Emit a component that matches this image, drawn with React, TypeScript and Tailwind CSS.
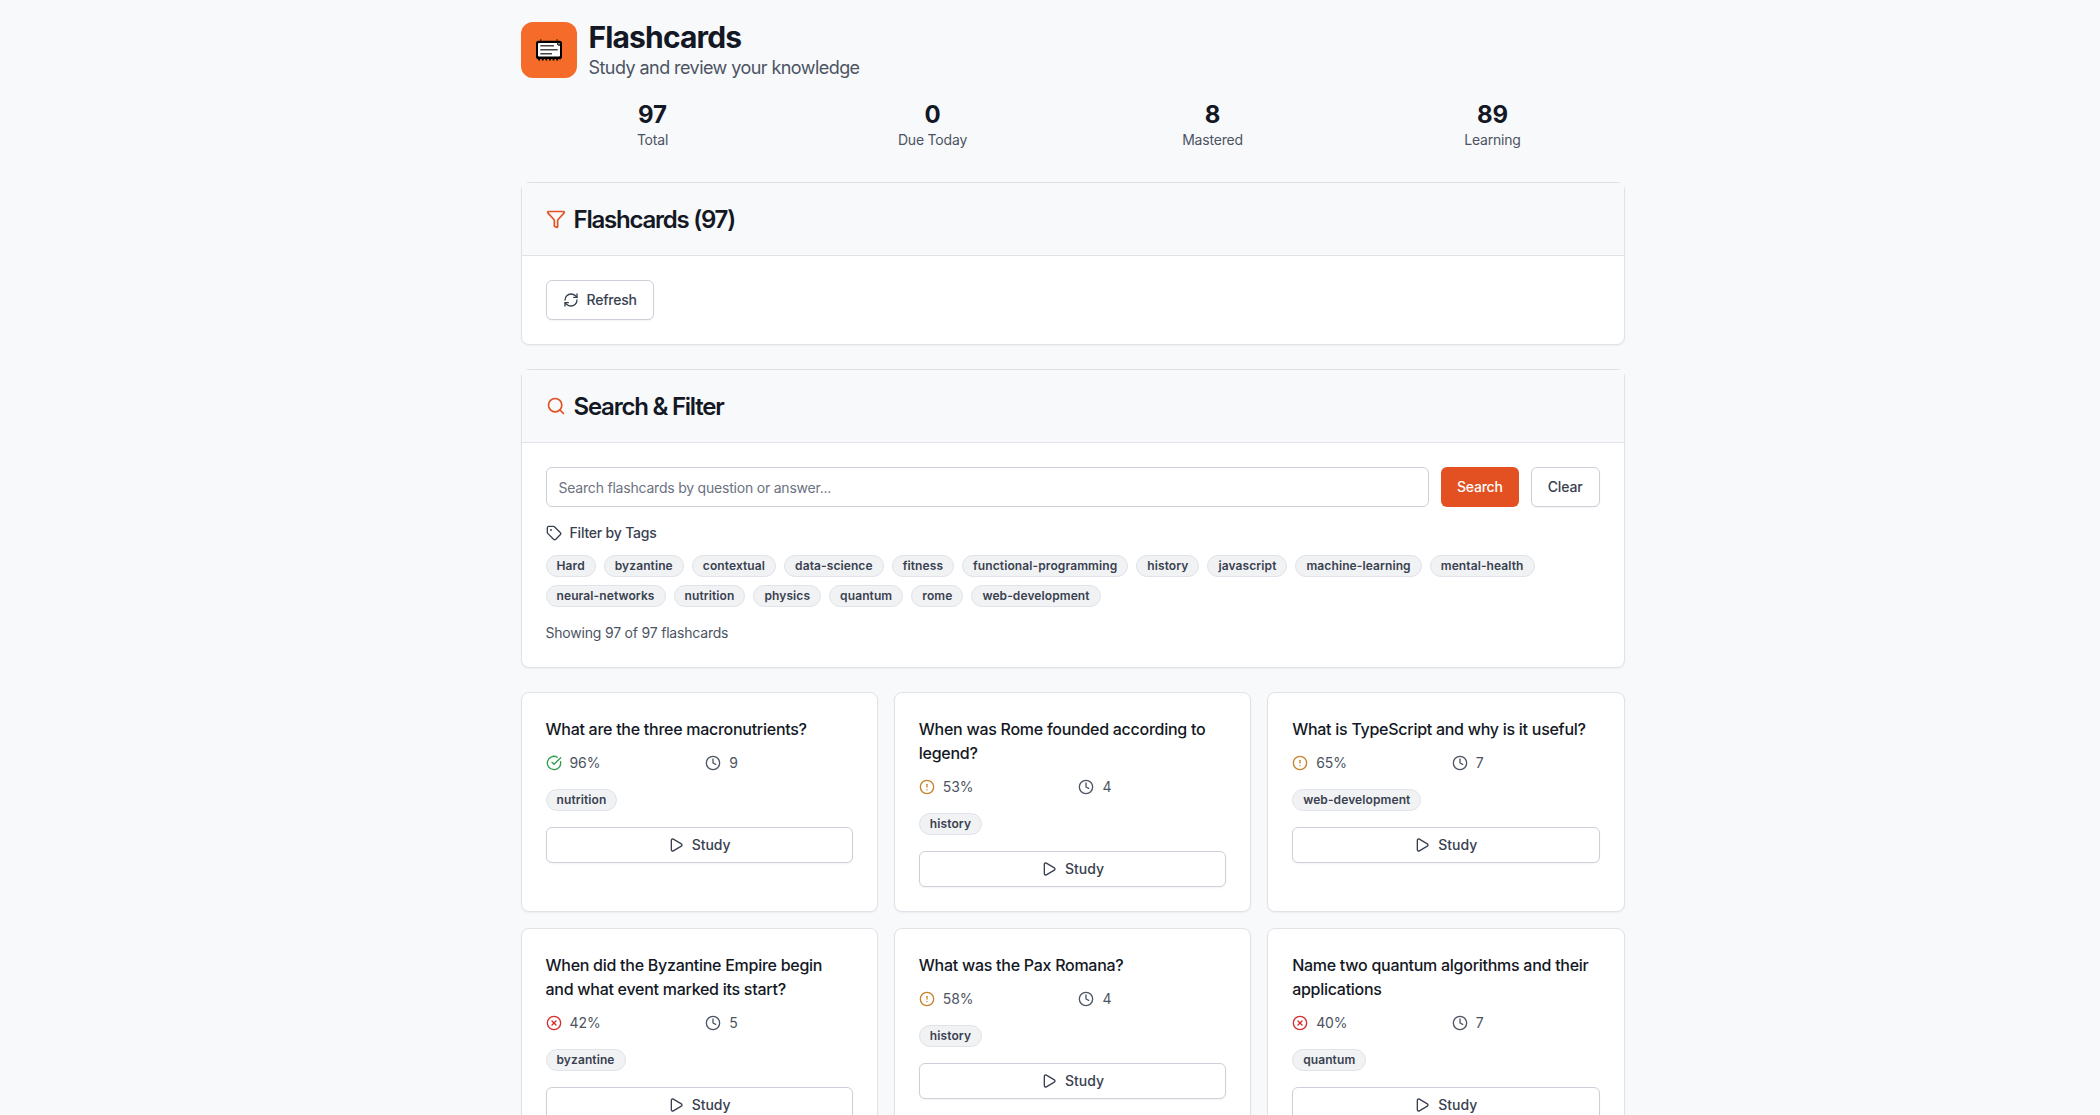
import React from "react";
import {
  CircleAlert,
  CircleCheckBig,
  CircleX,
  Clock,
  Funnel,
  Play,
  RefreshCw,
  Search,
  Tag,
} from "lucide-react";

const stats = [
  { value: 97, label: "Total" },
  { value: 0, label: "Due Today" },
  { value: 8, label: "Mastered" },
  { value: 89, label: "Learning" },
];

const tags = [
  "Hard", "byzantine", "contextual", "data-science", "fitness", "functional-programming",
  "history", "javascript", "machine-learning", "mental-health", "neural-networks",
  "nutrition", "physics", "quantum", "rome", "web-development",
];

const cards = [
  { q: "What are the three macronutrients?", score: 96, reviews: 9, tag: "nutrition" },
  { q: "When was Rome founded according to legend?", score: 53, reviews: 4, tag: "history" },
  { q: "What is TypeScript and why is it useful?", score: 65, reviews: 7, tag: "web-development" },
  { q: "When did the Byzantine Empire begin and what event marked its start?", score: 42, reviews: 5, tag: "byzantine" },
  { q: "What was the Pax Romana?", score: 58, reviews: 4, tag: "history" },
  { q: "Name two quantum algorithms and their applications", score: 40, reviews: 7, tag: "quantum" },
];

function CardsLogo() {
  return (
    <svg viewBox="0 0 32 32" className="h-8 w-8">
      <path d="M7.7 5v2M24 5v2" stroke="#6b3016" strokeWidth="1.3" />
      <rect x="3" y="6.8" width="26" height="18.2" rx="2.6" fill="#000" />
      <path d="M5.2 25.6h22" stroke="#000" strokeWidth="1.8" strokeDasharray="1.9 1.7" />
      <rect x="5" y="9" width="22" height="13.6" rx="1" fill="#fff" />
      <path d="M7.3 11.7H21M7.3 15.7h17.4M7.3 19.7H19" stroke="#444" strokeWidth="1.5" />
      <circle cx="26" cy="9.8" r="1.5" fill="#999" stroke="#000" strokeWidth="1" />
    </svg>
  );
}

function Badge({ children }: { children: React.ReactNode }) {
  return (
    <span className="inline-flex h-[22px] items-center rounded-full border border-[#e0e3e9] bg-[#f1f2f4] px-2.5 text-xs font-semibold tracking-[0.1px] text-[#394150]">
      {children}
    </span>
  );
}

function Panel({ icon, title, children }: { icon: React.ReactNode; title: string; children: React.ReactNode }) {
  return (
    <section className="mb-6 rounded-lg border border-[#e0e2e8] bg-white shadow-xs">
      <div className="border-b border-[#e0e2e8] bg-[#f8f9fb] p-6">
        <h2 className="flex h-6 items-center gap-2 text-2xl font-semibold tracking-[-1.23px] text-[#131824]">
          {icon}
          <span className="pt-0.5 leading-[22px]">{title}</span>
        </h2>
      </div>
      <div className="p-6">{children}</div>
    </section>
  );
}

function ScoreIcon({ score }: { score: number }) {
  if (score >= 80) return <CircleCheckBig className="size-4 text-[#2f9f4b]" />;
  if (score >= 50) return <CircleAlert className="size-4 text-[#c5842a]" />;
  return <CircleX className="size-4 text-[#d42f2c]" />;
}

const outline =
  "inline-flex items-center justify-center gap-2 rounded-md border border-[#cdd0d8] bg-white text-sm font-medium text-[#394150] shadow-xs";

export default function App() {
  return (
    <div className="h-[1115px] overflow-hidden bg-[#f8f9fb] pl-[45px] font-['Inter',sans-serif]">
      <main className="mx-auto max-w-6xl px-6 pt-[18px]">
        <header className="flex items-center gap-3">
          <div className="flex size-14 items-center justify-center rounded-xl bg-[#f56b29]">
            <CardsLogo />
          </div>
          <div>
            <h1 className="pt-0.5 text-3xl leading-[34px] font-bold tracking-[-0.85px] text-[#131824]">Flashcards</h1>
            <p className="text-lg tracking-[-0.56px] text-[#4c5462]">Study and review your knowledge</p>
          </div>
        </header>

        <div className="mt-4 mb-8 grid grid-cols-4 gap-4">
          {stats.map((s) => (
            <div key={s.label} className="text-center">
              <div className="pt-0.5 text-2xl leading-[30px] font-bold text-[#131824]">{s.value}</div>
              <div className="text-sm tracking-[-0.2px] text-[#4c5462]">{s.label}</div>
            </div>
          ))}
        </div>

        <Panel icon={<Funnel className="size-5 text-[#e35122]" />} title="Flashcards (97)">
          <button className={`${outline} h-10 px-4 tracking-[-0.22px]`}>
            <RefreshCw className="size-4" />
            Refresh
          </button>
        </Panel>

        <Panel icon={<Search className="size-5 text-[#e35122]" />} title="Search &amp; Filter">
          <div className="flex gap-3">
            <input
              className="h-10 flex-1 rounded-md border border-[#cdd0d8] bg-white px-3 text-sm tracking-[-0.21px] placeholder:text-[#6c727f]"
              placeholder="Search flashcards by question or answer..."
            />
            <button className="h-10 rounded-md bg-[#e35122] px-4 text-sm font-medium tracking-[-0.2px] text-white">Search</button>
            <button className={`${outline} h-10 px-4 tracking-[-0.15px]`}>Clear</button>
          </div>
          <div className="mt-4 flex items-center gap-2 text-sm font-medium tracking-[-0.2px] text-[#394150]">
            <Tag className="size-4" />
            Filter by Tags
          </div>
          <div className="mt-3 flex flex-wrap gap-2">
            {tags.map((t) => (
              <Badge key={t}>{t}</Badge>
            ))}
          </div>
          <p className="mt-4 text-sm tracking-[-0.2px] text-[#4c5462]">Showing 97 of 97 flashcards</p>
        </Panel>

        <div className="grid grid-cols-3 gap-4">
          {cards.map((c) => (
            <article key={c.q} className="rounded-lg border border-[#e0e2e8] bg-white p-6 shadow-xs">
              <h3 className="text-base font-medium tracking-[-0.27px] text-[#131824]">{c.q}</h3>
              <div className="mt-3 grid grid-cols-2 gap-3 text-sm text-[#4c5462]">
                <div className="flex items-center gap-2 tracking-[-0.1px]">
                  <ScoreIcon score={c.score} />
                  {c.score}%
                </div>
                <div className="flex items-center gap-2">
                  <Clock className="size-4" />
                  {c.reviews}
                </div>
              </div>
              <div className="mt-4 flex">
                <Badge>{c.tag}</Badge>
              </div>
              <button className={`${outline} mt-4 h-9 w-full`}>
                <Play className="size-4" />
                Study
              </button>
            </article>
          ))}
        </div>
      </main>
    </div>
  );
}
